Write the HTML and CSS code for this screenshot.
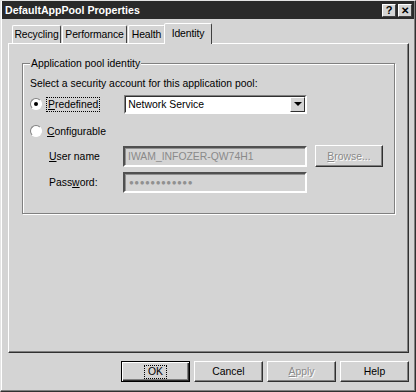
FILE: index.html
```html
<!DOCTYPE html>
<html>
<head>
<meta charset="utf-8">
<link rel="stylesheet" href="styles.css">
</head>
<body>
<div class="window">
  <div class="titlebar">
    <span class="title">DefaultAppPool Properties</span>
    <span class="tbtns"><span class="tbtn">?</span><span class="tbtn close">✕</span></span>
  </div>
  <div class="content">
    <div class="tabs">
      <div class="tab t-rec">Recycling</div>
      <div class="tab t-perf">Performance</div>
      <div class="tab t-health">Health</div>
      <div class="tab active">Identity</div>
    </div>
    <div class="panel">
      <fieldset class="group">
        <legend>Application pool identity</legend>
        <div class="intro">Select a security account for this application pool:</div>
        <div class="row r-pre">
          <span class="radio checked"><span class="dot"></span></span>
          <span class="rlabel focus"><u>P</u>redefined</span>
          <div class="select"><span class="seltext">Network Service</span><span class="arrow"><span class="tri"></span></span></div>
        </div>
        <div class="row r-conf">
          <span class="radio"></span>
          <span class="rlabel"><u>C</u>onfigurable</span>
        </div>
        <div class="row r-user">
          <span class="flabel"><u>U</u>ser name</span>
          <div class="input dis">IWAM_INFOZER-QW74H1</div>
          <div class="btn disabled browse"><span><u>B</u>rowse...</span></div>
        </div>
        <div class="row r-pass">
          <span class="flabel">Pass<u>w</u>ord:</span>
          <div class="input dis pw">●●●●●●●●●●●●</div>
        </div>
      </fieldset>
    </div>
    <div class="buttons">
      <div class="btn default"><span>OK</span></div>
      <div class="btn"><span>Cancel</span></div>
      <div class="btn disabled"><span><u>A</u>pply</span></div>
      <div class="btn"><span>Help</span></div>
    </div>
  </div>
</div>
</body>
</html>
```

FILE: styles.css
```css
html, body {
  margin: 0;
  padding: 0;
  background: #d4d4d4;
}
body {
  font-family: "Liberation Sans", Arial, sans-serif;
  font-size: 10.4px;
  color: #000;
}
.window {
  width: 416px;
  height: 392px;
  box-sizing: border-box;
  background: #d4d4d4;
  border: 1px solid;
  border-color: #e4e4e4 #303030 #303030 #e4e4e4;
  box-shadow: inset -1px -1px #808080, inset 1px 1px #fff;
  display: flex;
  flex-direction: column;
}
.titlebar {
  height: 18px;
  margin: 0 1px;
  background: #2a2a2a;
  display: flex;
  align-items: center;
  justify-content: space-between;
  padding: 0 2px 0 3px;
}
.title {
  color: #fff;
  font-weight: bold;
  font-size: 10.6px;
}
.tbtns {
  display: flex;
  gap: 2px;
}
.tbtn {
  width: 14px;
  height: 13px;
  box-sizing: border-box;
  background: #d4d4d4;
  border: 1px solid;
  border-color: #fff #404040 #404040 #fff;
  font-weight: bold;
  font-size: 11px;
  line-height: 11px;
  text-align: center;
  color: #000;
}
.tbtn.close {
  font-size: 10px;
}
.content {
  flex: 1;
  display: flex;
  flex-direction: column;
  padding: 3px 6px 0 7px;
}
.tabs {
  height: 21px;
  display: flex;
  align-items: flex-end;
  padding-left: 4px;
}
.tab {
  height: 18px;
  box-sizing: border-box;
  padding-top: 3px;
  text-align: center;
  border: 1px solid;
  border-bottom: none;
  border-color: #fff #404040 transparent #fff;
  border-radius: 2px 2px 0 0;
  margin-right: 1px;
  white-space: nowrap;
  letter-spacing: -0.1px;
}
.t-rec { width: 49px; }
.t-perf { width: 65px; }
.t-health { width: 37px; }
.tab.active {
  width: 48px;
  height: 21px;
  padding-top: 4px;
  margin-left: -2px;
  margin-right: 0;
  position: relative;
  top: 1px;
  background: #d4d4d4;
  z-index: 1;
}
.panel {
  height: 310px;
  box-sizing: border-box;
  border: 1px solid;
  border-color: #fff #303030 #303030 #fff;
  box-shadow: inset -1px -1px #808080;
  padding: 13px 13px 0 13px;
}
.group {
  margin: 0;
  height: 157px;
  box-sizing: border-box;
  border: 1px solid #808080;
  box-shadow: inset 1px 1px #fff, 1px 1px #fff;
  padding: 6px 7px 0 7px;
}
.group legend {
  padding: 0 1px;
  margin-left: 0;
  background: #d4d4d4;
  line-height: 13px;
}
.intro {
  height: 15px;
  line-height: 15px;
}
.row {
  display: flex;
  align-items: center;
}
.r-pre {
  height: 20px;
  margin-top: 3px;
}
.r-conf {
  height: 20px;
  margin-top: 7px;
}
.r-user {
  height: 22px;
  margin-top: 4px;
}
.r-pass {
  height: 22px;
  margin-top: 4px;
}
.radio {
  width: 12px;
  height: 12px;
  box-sizing: border-box;
  border-radius: 50%;
  border: 1px solid;
  border-color: #808080 #fff #fff #808080;
  background: #fff;
  display: flex;
  align-items: center;
  justify-content: center;
}
.dot {
  width: 4px;
  height: 4px;
  border-radius: 50%;
  background: #000;
}
.rlabel {
  margin-left: 5px;
  width: 71px;
}
.rlabel.focus {
  width: auto;
  outline: 1px dotted #000;
  margin-right: 25px;
  padding: 0 1px;
  line-height: 13px;
}
.select {
  width: 183px;
  height: 19px;
  box-sizing: border-box;
  border: 2px solid;
  border-color: #808080 #fff #fff #808080;
  background: #fff;
  display: flex;
  align-items: center;
  justify-content: space-between;
  position: relative;
}
.select::before {
  content: "";
  position: absolute;
  inset: -1px 0 0 -1px;
  border-top: 1px solid #303030;
  border-left: 1px solid #303030;
  pointer-events: none;
}
.seltext {
  padding-left: 2px;
}
.arrow {
  width: 15px;
  height: 15px;
  box-sizing: border-box;
  background: #d4d4d4;
  border: 1px solid;
  border-color: #fff #303030 #303030 #fff;
  display: flex;
  align-items: center;
  justify-content: center;
}
.tri {
  width: 0;
  height: 0;
  border-left: 4px solid transparent;
  border-right: 4px solid transparent;
  border-top: 4px solid #000;
}
.flabel {
  width: 74px;
  padding-left: 19px;
}
.input {
  width: 184px;
  height: 21px;
  box-sizing: border-box;
  border: 2px solid;
  border-color: #505050 #fff #fff #505050;
  box-shadow: inset 1px 1px #909090;
  display: flex;
  align-items: center;
  padding-left: 3px;
  color: #8a8a8a;
  white-space: nowrap;
  overflow: hidden;
}
.input.pw {
  font-size: 8px;
  letter-spacing: 0.5px;
  padding-left: 4px;
  color: #909090;
}
.btn {
  width: 69px;
  height: 21px;
  box-sizing: border-box;
  border: 1px solid;
  border-color: #fff #303030 #303030 #fff;
  box-shadow: inset -1px -1px #808080;
  display: flex;
  align-items: center;
  justify-content: center;
}
.btn.default {
  border: 1px solid #000;
  box-shadow: inset 1px 1px #fff, inset -1px -1px #303030, inset -2px -2px #808080;
}
.btn.default span {
  outline: 1px dotted #000;
  padding: 0 3px;
  line-height: 12px;
}
.btn.disabled {
  color: #8a8a8a;
  text-shadow: 1px 1px #fff;
}
.browse {
  margin-left: 8px;
  width: 68px;
  height: 22px;
}
.buttons {
  display: flex;
  justify-content: flex-end;
  gap: 4px;
  margin-top: 8px;
}
```
